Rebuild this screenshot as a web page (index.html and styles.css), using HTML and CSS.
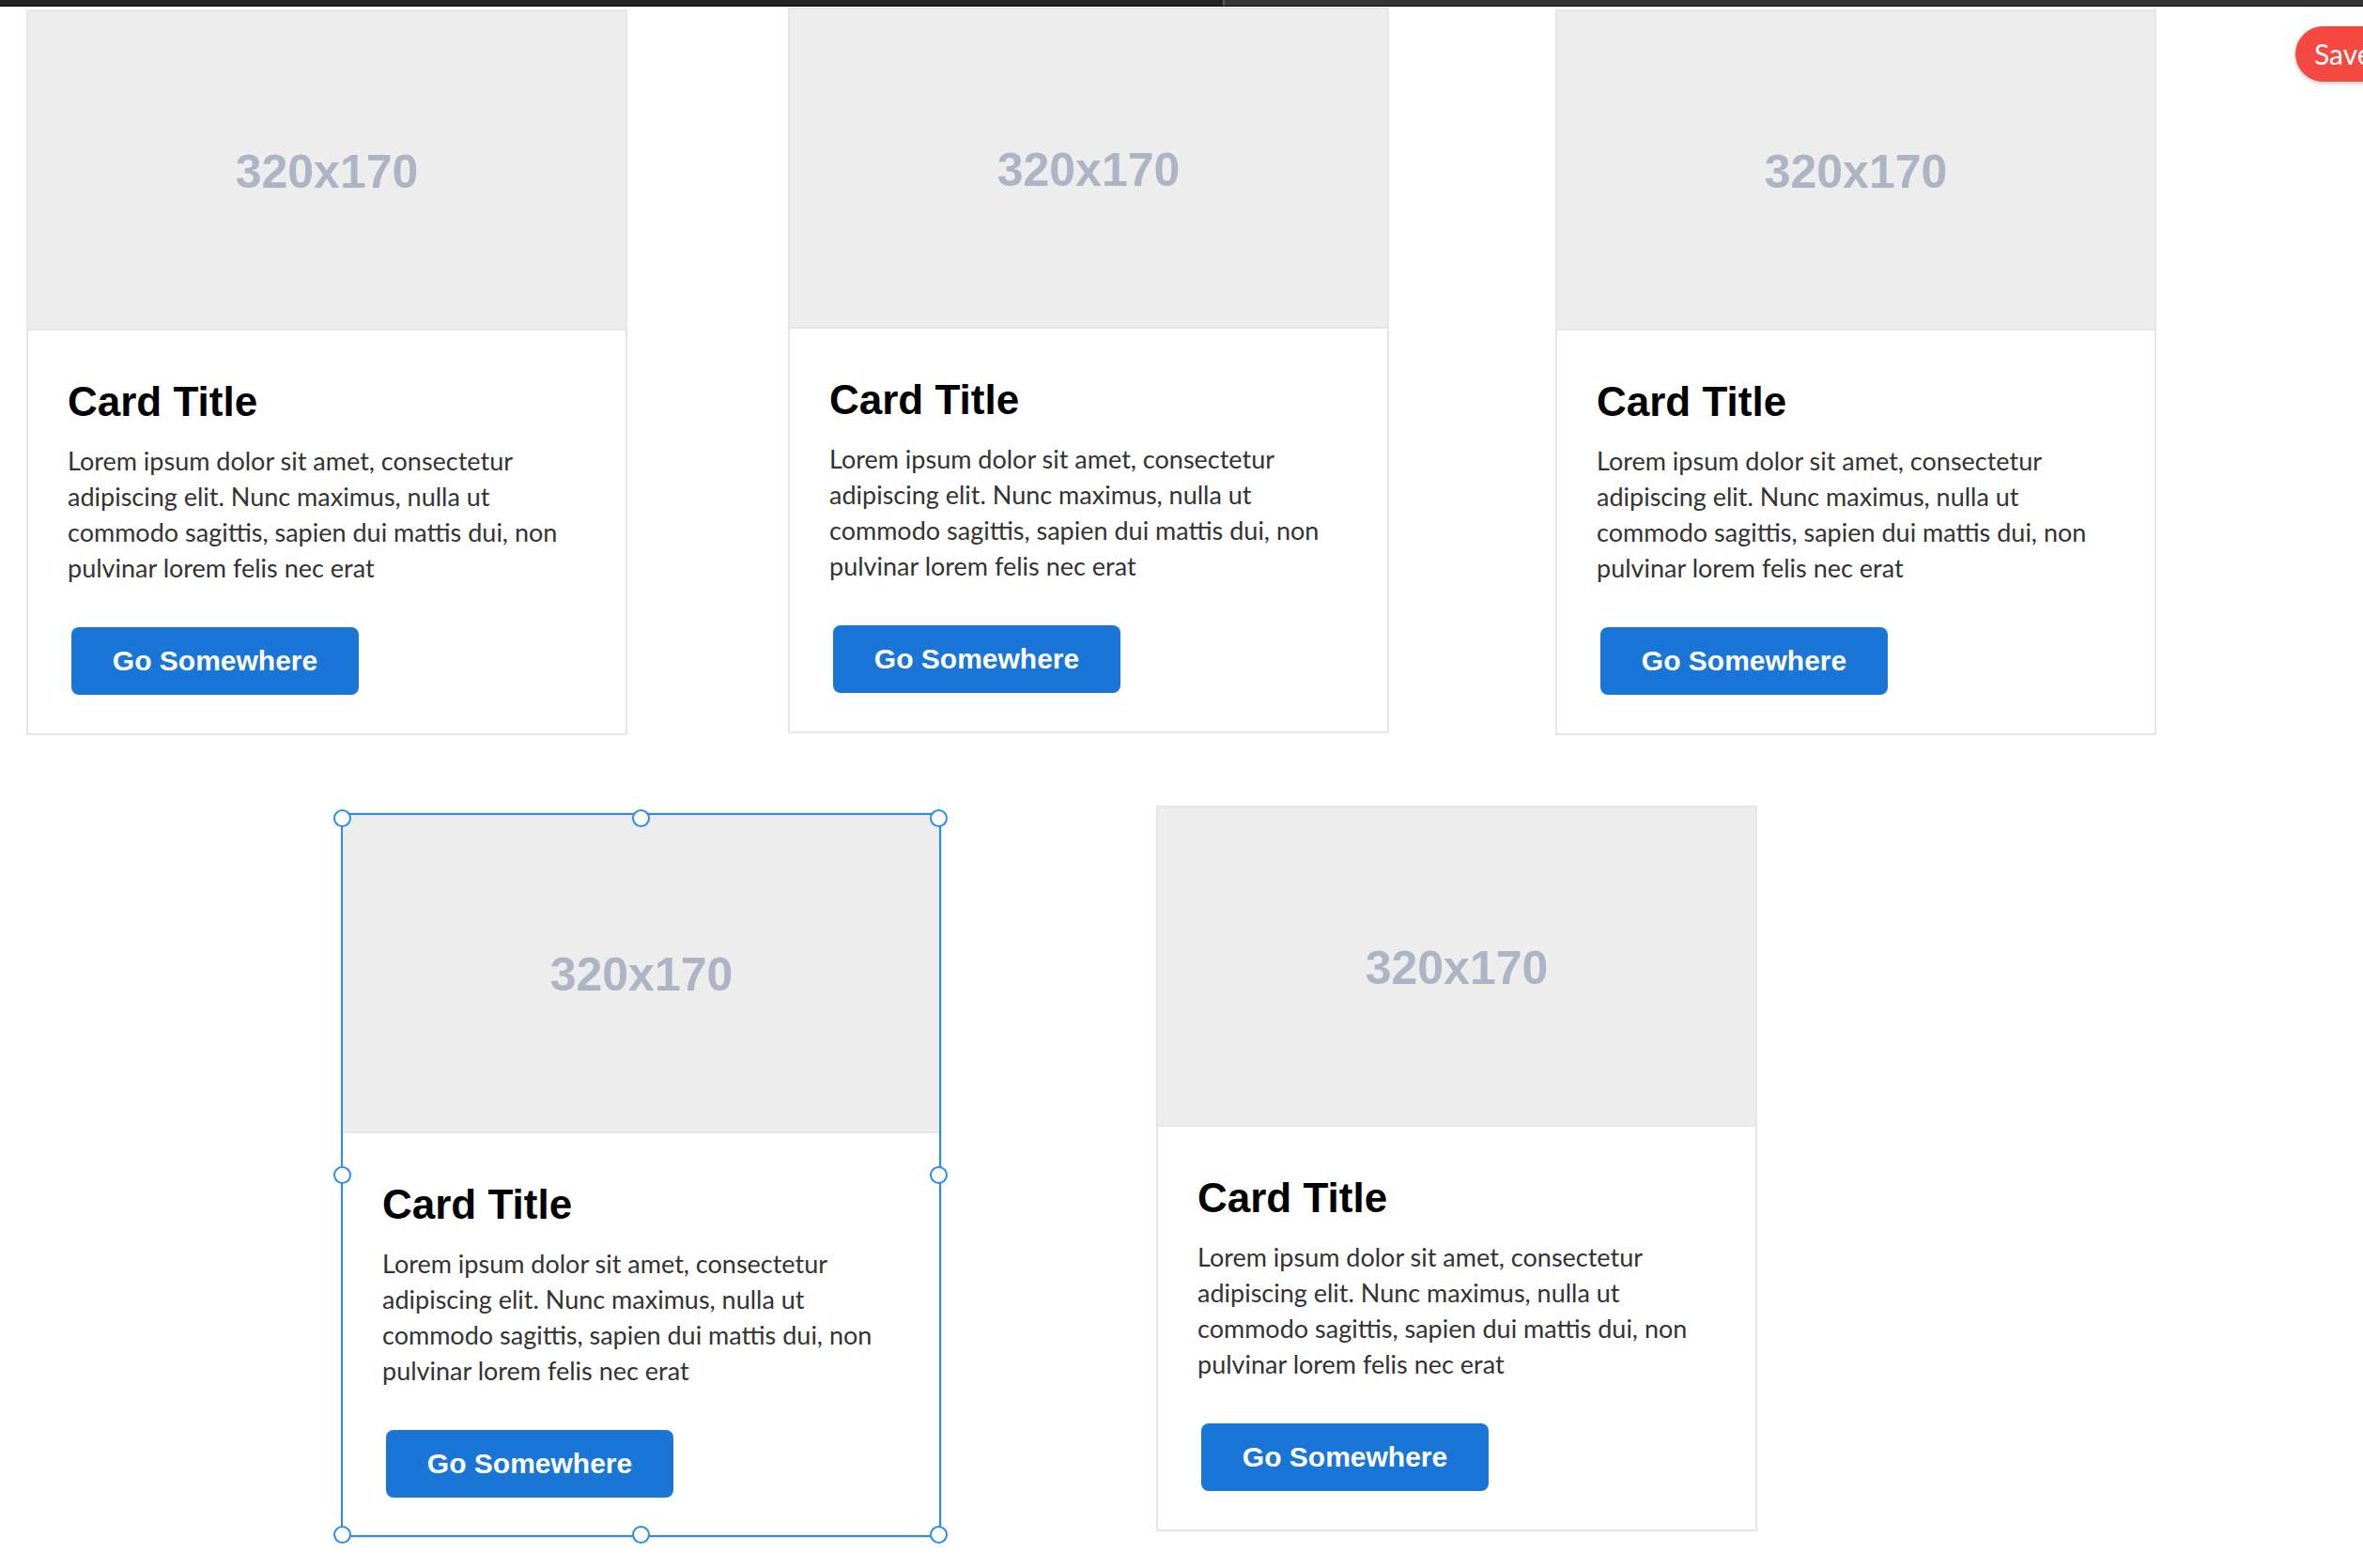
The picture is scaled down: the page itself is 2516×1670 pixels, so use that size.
FILE: index.html
```html
<!DOCTYPE html>
<html lang="en">
<head>
<meta charset="utf-8">
<title>Cards canvas</title>
<link rel="stylesheet" href="styles.css">
</head>
<body>
<div class="topbar">
  <div class="topbar-left"></div>
  <div class="topbar-right"></div>
</div>
<main class="canvas">
  <article class="card card-1">
    <div class="card-img"><span>320x170</span></div>
    <div class="card-body">
      <h2 class="card-title">Card Title</h2>
      <p class="card-text">Lorem ipsum dolor sit amet, consectetur adipiscing elit. Nunc maximus, nulla ut commodo sagittis, sapien dui mattis dui, non pulvinar lorem felis nec erat</p>
      <a class="btn" href="#">Go Somewhere</a>
    </div>
  </article>
  <article class="card card-2">
    <div class="card-img"><span>320x170</span></div>
    <div class="card-body">
      <h2 class="card-title">Card Title</h2>
      <p class="card-text">Lorem ipsum dolor sit amet, consectetur adipiscing elit. Nunc maximus, nulla ut commodo sagittis, sapien dui mattis dui, non pulvinar lorem felis nec erat</p>
      <a class="btn" href="#">Go Somewhere</a>
    </div>
  </article>
  <article class="card card-3">
    <div class="card-img"><span>320x170</span></div>
    <div class="card-body">
      <h2 class="card-title">Card Title</h2>
      <p class="card-text">Lorem ipsum dolor sit amet, consectetur adipiscing elit. Nunc maximus, nulla ut commodo sagittis, sapien dui mattis dui, non pulvinar lorem felis nec erat</p>
      <a class="btn" href="#">Go Somewhere</a>
    </div>
  </article>
  <article class="card card-4 is-selected">
    <div class="card-img"><span>320x170</span></div>
    <div class="card-body">
      <h2 class="card-title">Card Title</h2>
      <p class="card-text">Lorem ipsum dolor sit amet, consectetur adipiscing elit. Nunc maximus, nulla ut commodo sagittis, sapien dui mattis dui, non pulvinar lorem felis nec erat</p>
      <a class="btn" href="#">Go Somewhere</a>
    </div>
    <div class="selection">
      <span class="handle h-tl"></span>
      <span class="handle h-tm"></span>
      <span class="handle h-tr"></span>
      <span class="handle h-ml"></span>
      <span class="handle h-mr"></span>
      <span class="handle h-bl"></span>
      <span class="handle h-bm"></span>
      <span class="handle h-br"></span>
    </div>
  </article>
  <article class="card card-5">
    <div class="card-img"><span>320x170</span></div>
    <div class="card-body">
      <h2 class="card-title">Card Title</h2>
      <p class="card-text">Lorem ipsum dolor sit amet, consectetur adipiscing elit. Nunc maximus, nulla ut commodo sagittis, sapien dui mattis dui, non pulvinar lorem felis nec erat</p>
      <a class="btn" href="#">Go Somewhere</a>
    </div>
  </article>
  <button class="save-btn" type="button">Save</button>
</main>
</body>
</html>
```

FILE: styles.css
```css
html, body {
  margin: 0;
  padding: 0;
  background: #ffffff;
  width: 2516px;
  height: 1670px;
  overflow: hidden;
}

.topbar {
  display: flex;
  height: 6px;
  border-bottom: 1px solid #000;
  position: relative;
  z-index: 2;
}
.topbar-left {
  width: 1302px;
  background: #232323;
  border-right: 2px solid #5a5a5a;
}
.topbar-right {
  flex: 1;
  background: #373737;
}

.canvas {
  position: absolute;
  left: 0;
  top: 0;
  width: 2516px;
  height: 1670px;
}

.card {
  position: absolute;
  width: 640px;
  box-sizing: border-box;
  border: 2px solid #e6e6e6;
  background: #fff;
  display: flex;
  flex-direction: column;
}
.card-1 { left: 28px; top: 10px; }
.card-2 { left: 839px; top: 8px; }
.card-3 { left: 1656px; top: 10px; }
.card-4 { left: 363px; top: 865px; }
.card-5 { left: 1231px; top: 858px; }

.card-img {
  height: 338px;
  background: #ededed;
  border-bottom: 2px solid #e6e6e6;
  display: flex;
  align-items: center;
  justify-content: center;
}
.card-img span {
  font-family: "Liberation Sans", Arial, sans-serif;
  font-weight: 700;
  font-size: 50px;
  color: #adb4c3;
  margin-top: 4px;
}

.card-body {
  padding: 50px 42px 41px 42px;
  display: flex;
  flex-direction: column;
  align-items: flex-start;
}

.card-title {
  margin: 0 0 18px 0;
  font-family: "Liberation Sans", Arial, sans-serif;
  font-weight: 700;
  font-size: 44px;
  line-height: 52px;
  color: #000;
}

.card-text {
  margin: 0 0 44px 0;
  font-family: Lato, "Open Sans", sans-serif;
  font-size: 27px;
  line-height: 38px;
  color: #333;
  width: 540px;
}

.btn {
  display: flex;
  align-items: center;
  justify-content: center;
  margin-left: 4px;
  width: 306px;
  height: 72px;
  box-sizing: border-box;
  border-radius: 8px;
  background: #1976d6;
  color: #fff;
  text-decoration: none;
  font-family: "Liberation Sans", Arial, sans-serif;
  font-weight: 700;
  font-size: 30px;
}

.selection {
  position: absolute;
  left: -2px;
  top: -1px;
  right: -1px;
  bottom: -1px;
  border: 2px solid #2b8cf2;
  pointer-events: none;
}
.handle {
  position: absolute;
  width: 15px;
  height: 15px;
  border: 2px solid #2b8cf2;
  background: #fff;
  border-radius: 50%;
  margin-left: -10px;
  margin-top: -10px;
}
.h-tl { left: 0; top: 4px; }
.h-tm { left: 50%; top: 4px; }
.h-tr { left: 100%; top: 4px; }
.h-ml { left: 0; top: 50%; }
.h-mr { left: 100%; top: 50%; }
.h-bl { left: 0; top: 100%; }
.h-bm { left: 50%; top: 100%; }
.h-br { left: 100%; top: 100%; }

.save-btn {
  position: absolute;
  left: 2444px;
  top: 28px;
  width: 140px;
  height: 59px;
  border: none;
  border-radius: 30px;
  background: #f44840;
  color: #fff;
  font-family: Lato, "Open Sans", sans-serif;
  font-size: 30px;
  text-align: left;
  padding: 0 0 2px 20px;
  box-shadow: 0 2px 5px rgba(0, 0, 0, 0.22);
}
```
